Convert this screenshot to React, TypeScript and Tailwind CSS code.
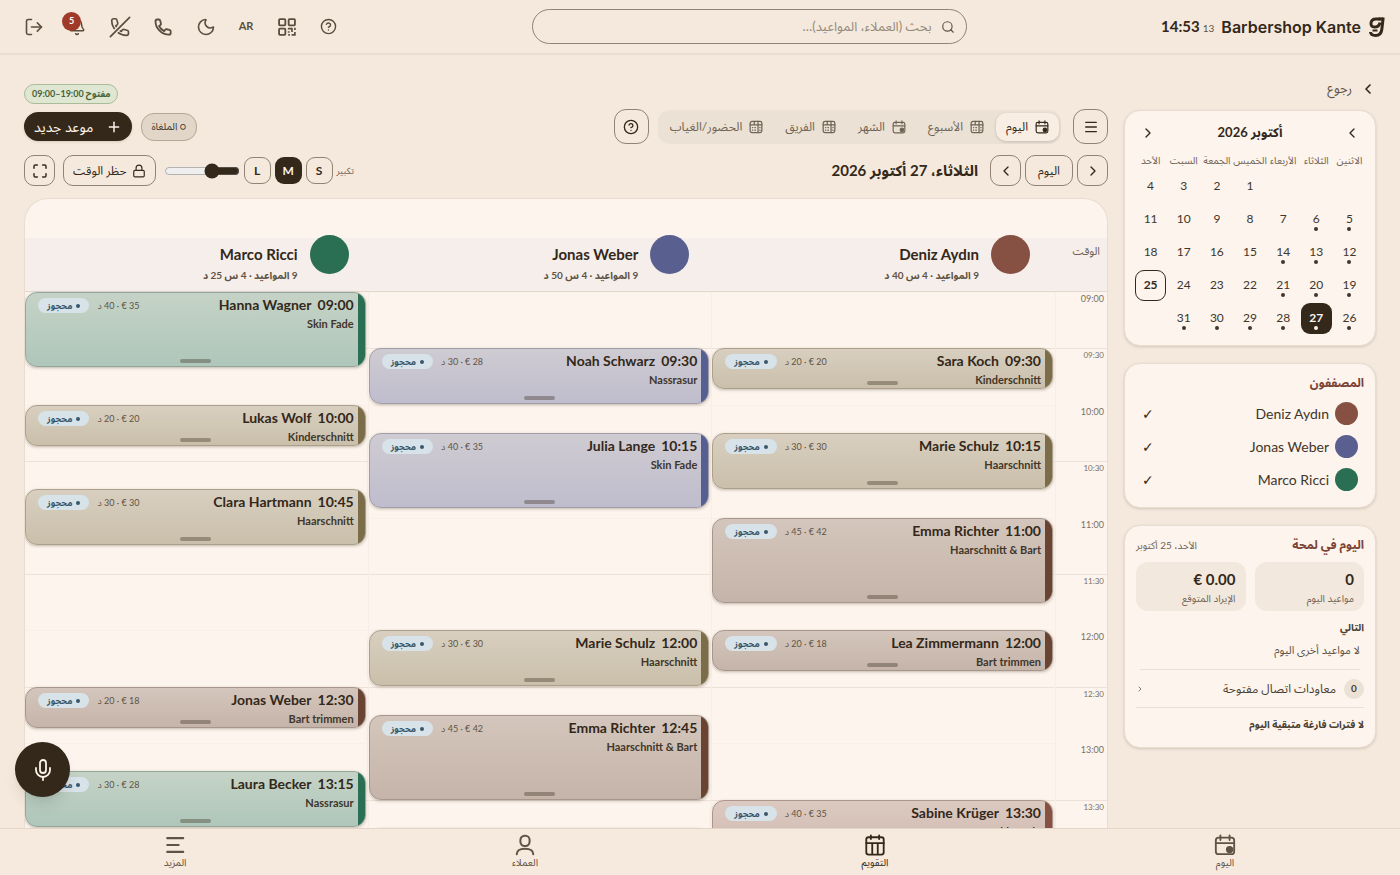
import React from 'react';
import {
  Bell,
  ChevronLeft,
  ChevronRight,
  CircleHelp,
  Lock,
  LogOut,
  Menu,
  Mic,
  Moon,
  Plus,
  Search,
} from 'lucide-react';

// One minute on the day grid, in pixels
const MINUTE = 1.88;
const OPENING = 9 * 60;

const toMinutes = (time: string) => {
  const [h, m] = time.split(':').map(Number);
  return h * 60 + m - OPENING;
};

const offset = (time: string) => Math.round(toMinutes(time) * MINUTE);

type Tone = 'green' | 'sand' | 'indigo' | 'brown' | 'rust';

const tones: Record<Tone, string> = {
  green: 'from-[#c5d3c6] to-[#afc6ba] border-[#93a79a]',
  sand: 'from-[#d9cfc0] to-[#c9bfaa] border-[#aca08d]',
  indigo: 'from-[#cfcbd2] to-[#bfbdcd] border-[#a19ea9]',
  brown: 'from-[#d4c6bc] to-[#c5b4aa] border-[#a7968c]',
  rust: 'from-[#dbcac1] to-[#ccb0a8] border-[#ad958b]',
};

const stripes: Record<Tone, string> = {
  green: 'bg-[#2a6e54]',
  sand: 'bg-[#7b6d49]',
  indigo: 'bg-[#565f92]',
  brown: 'bg-[#694433]',
  rust: 'bg-[#865142]',
};

interface Booking {
  time: string;
  client: string;
  service: string;
  price: number;
  length: number;
  tone: Tone;
}

interface Stylist {
  name: string;
  color: string;
  load: string;
  bookings: Booking[];
}

const stylists: Stylist[] = [
  {
    name: 'Deniz Aydın',
    color: 'bg-[#865142]',
    load: '9 المواعيد · 4 س 40 د',
    bookings: [
      { time: '09:30', client: 'Sara Koch', service: 'Kinderschnitt', price: 20, length: 20, tone: 'sand' },
      { time: '10:15', client: 'Marie Schulz', service: 'Haarschnitt', price: 30, length: 30, tone: 'sand' },
      { time: '11:00', client: 'Emma Richter', service: 'Haarschnitt & Bart', price: 42, length: 45, tone: 'brown' },
      { time: '12:00', client: 'Lea Zimmermann', service: 'Bart trimmen', price: 18, length: 20, tone: 'brown' },
      { time: '13:30', client: 'Sabine Krüger', service: 'Skin Fade', price: 35, length: 40, tone: 'rust' },
    ],
  },
  {
    name: 'Jonas Weber',
    color: 'bg-[#596090]',
    load: '9 المواعيد · 4 س 50 د',
    bookings: [
      { time: '09:30', client: 'Noah Schwarz', service: 'Nassrasur', price: 28, length: 30, tone: 'indigo' },
      { time: '10:15', client: 'Julia Lange', service: 'Skin Fade', price: 35, length: 40, tone: 'indigo' },
      { time: '12:00', client: 'Marie Schulz', service: 'Haarschnitt', price: 30, length: 30, tone: 'sand' },
      { time: '12:45', client: 'Emma Richter', service: 'Haarschnitt & Bart', price: 42, length: 45, tone: 'brown' },
      { time: '13:45', client: 'Lea Zimmermann', service: 'Bart trimmen', price: 18, length: 20, tone: 'brown' },
    ],
  },
  {
    name: 'Marco Ricci',
    color: 'bg-[#2a6e54]',
    load: '9 المواعيد · 4 س 25 د',
    bookings: [
      { time: '09:00', client: 'Hanna Wagner', service: 'Skin Fade', price: 35, length: 40, tone: 'green' },
      { time: '10:00', client: 'Lukas Wolf', service: 'Kinderschnitt', price: 20, length: 20, tone: 'sand' },
      { time: '10:45', client: 'Clara Hartmann', service: 'Haarschnitt', price: 30, length: 30, tone: 'sand' },
      { time: '12:30', client: 'Jonas Weber', service: 'Bart trimmen', price: 18, length: 20, tone: 'brown' },
      { time: '13:15', client: 'Laura Becker', service: 'Nassrasur', price: 28, length: 30, tone: 'green' },
    ],
  },
];

const slots = ['09:00', '09:30', '10:00', '10:30', '11:00', '11:30', '12:00', '12:30', '13:00', '13:30'];

const weekdays = ['الاثنين', 'الثلاثاء', 'الأربعاء', 'الخميس', 'الجمعة', 'السبت', 'الأحد'];
const busyDays = [5, 6, 12, 13, 14, 19, 20, 21, 26, 27, 28, 29, 30, 31];

const outlined = 'flex items-center justify-center border border-[#8f8373] text-[#33281a]';
const card = 'rounded-2xl border border-[#e9ddd1] bg-[#fcf4ed] shadow-[0_1px_3px_rgba(60,40,20,0.18)]';

const handset =
  'M3 5a2 2 0 0 1 2-2h2c1 0 1.500.6 1.700 1.500l.8 3.200c.2.8 0 1.400-.6 1.900l-1.600 1.200c1.300 2.700 3.400 4.800 6.100 6.100l1.200-1.600c.5-.6 1.100-.8 1.900-.6l3.200.8c.9.2 1.500.8 1.500 1.700v2a2 2 0 0 1-2 2C10.500 21.200 3 13.500 3 5z';

function PhoneIcon() {
  return (
    <svg viewBox="0 0 24 24" className="size-[20px]" fill="none" stroke="currentColor" strokeWidth="2.200" strokeLinejoin="round">
      <path d={handset} />
    </svg>
  );
}

function PhoneSlash() {
  return (
    <svg viewBox="0 0 24 24" className="size-[22px]" fill="none" stroke="currentColor" strokeWidth="1.800" strokeLinecap="round" strokeLinejoin="round">
      <path d={handset} />
      <path d="M22 2 2 22" stroke="#f5e9dd" strokeWidth="5" />
      <path d="M22.500 1.500 1.500 22.500" />
    </svg>
  );
}

function QrIcon() {
  return (
    <svg viewBox="0 0 24 24" className="size-[20px]" fill="none" stroke="currentColor" strokeWidth="2.200" strokeLinejoin="round">
      <rect x="2.500" y="2.500" width="7.500" height="7.500" rx="1" />
      <rect x="14" y="2.500" width="7.500" height="7.500" rx="1" />
      <rect x="2.500" y="14" width="7.500" height="7.500" rx="1" />
      <path d="M13 14h5v4M21.500 13v2.500M14 17v2M21.500 18v3.500H17.500M13.500 21.500h2" strokeWidth="2" />
    </svg>
  );
}

function DayIcon({ className }: { className: string }) {
  return (
    <svg viewBox="0 0 24 24" className={className} fill="none" stroke="currentColor" strokeWidth="2" strokeLinecap="round" strokeLinejoin="round">
      <rect x="2" y="4" width="20" height="18" rx="3" />
      <path d="M2 10h20M7 1.500v5M17 1.500v5" />
      <circle cx="17" cy="17" r="3" fill="currentColor" />
    </svg>
  );
}

function GridIcon() {
  return (
    <svg viewBox="0 0 24 24" className="size-[14px]" fill="none" stroke="currentColor" strokeWidth="2.100" strokeLinecap="round" strokeLinejoin="round">
      <rect x="2" y="2.500" width="20" height="19" rx="3" />
      <path d="M2 8.500h20M9 2.500v6M15.500 2.500v19" />
      <path d="M6 13h.5M10 13h1M6 17.500h.5M10 17.500h1M18.500 13h.5M18.500 17.500h.5" />
    </svg>
  );
}

function CalendarColumns() {
  return (
    <svg viewBox="0 0 24 24" className="size-[22px]" fill="none" stroke="currentColor" strokeWidth="2" strokeLinecap="round" strokeLinejoin="round">
      <rect x="2.500" y="3.500" width="19" height="19" rx="2.500" />
      <path d="M2.500 10h19M9 10v12M15 10v12M7.500 1.500v4M16.500 1.500v4" />
    </svg>
  );
}

function Person() {
  return (
    <svg viewBox="0 0 24 24" className="size-[22px]" fill="none" stroke="currentColor" strokeWidth="2.200" strokeLinecap="round">
      <rect x="7" y="2" width="10" height="11" rx="4.500" />
      <path d="M3 22c0-4 3.500-6 9-6s9 2 9 6" />
    </svg>
  );
}

function Lines() {
  return (
    <svg viewBox="0 0 24 24" className="size-[22px]" fill="none" stroke="currentColor" strokeWidth="2.200" strokeLinecap="round">
      <path d="M3.500 4.500h17.500M3.500 12h12.500M3.500 19.500h17.500" />
    </svg>
  );
}

function Corners() {
  return (
    <svg viewBox="0 0 24 24" className="size-4" fill="none" stroke="currentColor" strokeWidth="2.200" strokeLinecap="round" strokeLinejoin="round">
      <path d="M8 3H5a2 2 0 0 0-2 2v3M16 3h3a2 2 0 0 1 2 2v3M8 21H5a2 2 0 0 1-2-2v-3M16 21h3a2 2 0 0 0 2-2v-3" />
    </svg>
  );
}

function Logo() {
  return (
    <svg viewBox="0 0 18 22" className="h-[22px] w-[18px]" fill="none" stroke="currentColor" strokeWidth="3">
      <path d="M12.500 3H8C4.800 3 3.200 4.600 3 7.200c-.2 2.600 1 3.900 3.400 3.900 3 0 5.100-1.700 5.600-4.600" />
      <path d="M10.500 3h4.800" />
      <path d="M15.200 1.500 13.800 13.500c-.5 4-2.300 6-6.100 6-3 0-5-.9-5.200-3.500" />
      <path d="M4.500 14.500h5" strokeWidth="2" />
    </svg>
  );
}

function IconButton({ label, children }: { label: string; children: React.ReactNode }) {
  return (
    <button aria-label={label} className="relative flex size-10 items-center justify-center">
      {children}
    </button>
  );
}

function TopBar() {
  return (
    <header className="flex h-[55px] shrink-0 items-center justify-between border-b-2 border-[#e9ddd1] px-[14px]">
      <div className="flex w-[236px] items-center gap-[7px]">
        <Logo />
        <span dir="ltr" className="font-[Inter] text-[16px] font-semibold whitespace-nowrap">Barbershop Kante</span>
        <time dir="ltr" className="flex items-baseline gap-[3px] text-[15px] font-bold">
          14:53 <span className="text-[10px] font-normal text-[#5f5344]">13</span>
        </time>
      </div>
      <label className="flex h-[35px] w-[435px] items-center gap-[9px] rounded-full border border-[#8f8373] px-[11px]">
        <Search className="size-[14px] text-[#5f5344]" strokeWidth={2} />
        <input
          type="search"
          aria-label="بحث"
          placeholder="بحث (العملاء، المواعيد)…"
          className="min-w-0 flex-1 bg-transparent text-[13px] outline-none placeholder:text-[#94897b]"
        />
      </label>
      <div className="flex text-[#5a4d3e]">
        <div className="flex gap-px">
          <IconButton label="مساعدة"><CircleHelp className="size-[17px]" strokeWidth={2} /></IconButton>
          <IconButton label="رمز QR"><QrIcon /></IconButton>
          <IconButton label="اللغة"><span className="text-[11px] font-bold">AR</span></IconButton>
        </div>
        <div className="flex gap-[3px]">
          <IconButton label="الوضع الليلي"><Moon className="size-[20px]" strokeWidth={1.9} /></IconButton>
          <IconButton label="اتصال"><PhoneIcon /></IconButton>
          <IconButton label="إيقاف المكالمات"><PhoneSlash /></IconButton>
          <IconButton label="الإشعارات">
            <Bell className="size-[18px]" strokeWidth={2} />
            <span className="absolute top-[5px] left-[5px] flex size-[19px] items-center justify-center rounded-full bg-[#a03a28] text-[9px] font-bold text-white">5</span>
          </IconButton>
          <IconButton label="تسجيل الخروج"><LogOut className="size-[20px]" strokeWidth={1.9} /></IconButton>
        </div>
      </div>
    </header>
  );
}

function MiniCalendar() {
  return (
    <section className={`${card} px-[10px] pt-[9px] pb-[11px]`}>
      <div className="flex h-[25px] items-center justify-between px-[5px]">
        <button aria-label="الشهر السابق"><ChevronLeft className="size-4" /></button>
        <h2 className="text-[13px] font-bold">أكتوبر 2026</h2>
        <button aria-label="الشهر التالي"><ChevronRight className="size-4" /></button>
      </div>
      <div className="mt-[6px] grid grid-cols-7 gap-[2px] text-center">
        {weekdays.map((day) => (
          <span key={day} className="flex h-[18px] items-center justify-center text-[10px] whitespace-nowrap text-[#6f6354]">{day}</span>
        ))}
        <span className="col-span-3" />
        {Array.from({ length: 31 }, (_, i) => i + 1).map((day) => (
          <button
            key={day}
            className={`relative h-[31px] rounded-[9px] pb-[2px] text-[12px] ${
              day === 27 ? 'bg-[#33281a] font-bold text-[#fcf4ed]' : day === 25 ? 'border border-[#33281a] font-bold' : 'text-[#41362a]'
            }`}
          >
            {day}
            {busyDays.includes(day) && (
              <span className="absolute inset-x-0 bottom-1 mx-auto size-1 rounded-full bg-current" />
            )}
          </button>
        ))}
      </div>
    </section>
  );
}

function StylistFilter() {
  return (
    <section className={`${card} px-[11px] pt-[10px] pb-[11px]`}>
      <h2 className="text-[12px] leading-[18px] font-bold text-[#7c4234]">المصففون</h2>
      <div className="mt-[5px]">
        {stylists.map((s) => (
          <button key={s.name} aria-pressed="true" className="flex h-[33px] w-full items-center gap-[6px] px-[6px] text-[14px] text-[#41362a]">
            <span className={`size-[23px] rounded-full ${s.color}`} />
            <span dir="ltr">{s.name}</span>
            <span className="ms-auto text-[14px] text-[#33281a]">✓</span>
          </button>
        ))}
      </div>
    </section>
  );
}

function Glance() {
  return (
    <section className={`${card} px-[11px] pt-[10px] pb-[13px] text-[#4a3e30]`}>
      <div className="flex items-center justify-between leading-[18px]">
        <h2 className="text-[12px] font-bold text-[#7c4234]">اليوم في لمحة</h2>
        <span className="text-[10px] text-[#6f6354]">الأحد، 25 أكتوبر</span>
      </div>
      <div className="mt-2 grid grid-cols-2 gap-[9px]">
        <div className="rounded-xl bg-[#f2e8dd] px-[10px] pt-[6px] pb-[5px]">
          <p className="text-[15px] leading-[22px] font-bold text-[#33281a]">0</p>
          <p className="text-[10px] leading-[16px] text-[#6f6354]">مواعيد اليوم</p>
        </div>
        <div className="rounded-xl bg-[#f2e8dd] px-[10px] pt-[6px] pb-[5px]">
          <p className="text-[15px] leading-[22px] font-bold text-[#33281a]">0.00 €</p>
          <p className="text-[10px] leading-[16px] text-[#6f6354]">الإيراد المتوقع</p>
        </div>
      </div>
      <h3 className="mt-[7px] text-[10px] leading-[18px] font-bold">التالي</h3>
      <p className="mx-1 border-b border-[#eadfd4] pt-[4px] pb-[9px] text-[11px] leading-[20px] text-[#5f5344]">لا مواعيد أخرى اليوم</p>
      <button className="flex h-[38px] w-full items-center gap-2 border-b border-[#eadfd4] text-[12px]">
        <span className="flex size-5 items-center justify-center rounded-full bg-[#ebe1d4] text-[10px] font-bold">0</span>
        معاودات اتصال مفتوحة
        <ChevronRight className="ms-auto size-2" />
      </button>
      <p className="pt-[6px] text-[10px] leading-[20px] font-bold">لا فترات فارغة متبقية اليوم</p>
    </section>
  );
}

function ViewSwitch() {
  const views = ['اليوم', 'الأسبوع', 'الشهر', 'الفريق', 'الحضور/الغياب'];
  return (
    <div className="flex h-[34px] items-center gap-[2px] rounded-xl bg-[#ebe1d5] p-[2px]">
      {views.map((view, i) => (
        <button
          key={view}
          className={`flex h-[28px] items-center gap-[7px] rounded-[10px] px-[10px] text-[12px] whitespace-nowrap ${
            i === 0 ? 'bg-[#f8eee4] text-[#33281a] shadow-[0_1px_3px_rgba(60,40,20,0.2)]' : 'text-[#6f6354]'
          }`}
        >
          {i === 0 || i === 2 ? <DayIcon className="size-[14px]" /> : <GridIcon />}
          {view}
        </button>
      ))}
    </div>
  );
}

function Toolbar() {
  return (
    <>
      <div className="flex items-end justify-between pt-[5px]">
        <div className="flex items-center gap-3">
          <button aria-label="القائمة" className={`${outlined} size-[35px] rounded-xl`}><Menu className="size-4" /></button>
          <ViewSwitch />
          <button aria-label="مساعدة" className={`${outlined} -ms-[3px] size-[35px] rounded-xl text-[#5f5344]`}><CircleHelp className="size-4" /></button>
        </div>
        <div className="flex flex-col items-end gap-2 pb-[3px]">
          <span className="rounded-full border border-[#a9bb98] bg-[#dfe7d2] px-[7px] text-[9px] leading-[18px] font-bold text-[#4a6337]">
            مفتوح <bdi dir="ltr">09:00–19:00</bdi>
          </span>
          <div className="flex items-center gap-[9px]">
            <button className="h-[28px] rounded-[13px] border border-[#b3a797] bg-[#e2d6c9] px-[9px] text-[10px] text-[#41362a]">○ الملغاة</button>
            <button className="flex h-[29px] items-center gap-[13px] rounded-full bg-[#33281a] px-[10px] text-[14px] text-[#fcf4ed] shadow-sm">
              <Plus className="size-4" strokeWidth={2.2} />
              موعد جديد
            </button>
          </div>
        </div>
      </div>
      <div className="mt-[11px] flex items-center justify-between">
        <div className="flex items-center gap-1">
          <button aria-label="اليوم التالي" className={`${outlined} size-[31px] rounded-[10px]`}><ChevronRight className="size-4" /></button>
          <button className={`${outlined} h-[31px] w-[48px] rounded-[10px] text-[12px]`}>اليوم</button>
          <button aria-label="اليوم السابق" className={`${outlined} size-[31px] rounded-[10px]`}><ChevronLeft className="size-4" /></button>
          <h1 className="ms-2 text-[15px] font-bold">الثلاثاء، 27 أكتوبر 2026</h1>
        </div>
        <div className="flex items-center gap-1">
          <label htmlFor="zoom" className="text-[9px] text-[#6f6354]">تكبير</label>
          <button className={`${outlined} size-[27px] rounded-[9px] text-[12px] font-bold`}>S</button>
          <button className="size-[27px] rounded-[9px] bg-[#33281a] text-[12px] font-bold text-[#fcf4ed]">M</button>
          <button className={`${outlined} size-[27px] rounded-[9px] text-[12px] font-bold`}>L</button>
          <input id="zoom" type="range" min={0} max={100} defaultValue={33} className="w-[76px] accent-[#33281a]" />
          <button className={`${outlined} ms-1 h-[31px] gap-[5px] rounded-[10px] px-[9px] text-[12px]`}>
            <Lock className="size-[14px]" />
            حظر الوقت
          </button>
          <button aria-label="ملء الشاشة" className={`${outlined} ms-1 size-[31px] rounded-[10px]`}><Corners /></button>
        </div>
      </div>
    </>
  );
}

function BookingCard({ booking }: { booking: Booking }) {
  const height = Math.max(41, Math.round(booking.length * MINUTE));
  return (
    <button
      className={`absolute right-[2px] left-0 flex items-start justify-between overflow-hidden rounded-xl border bg-linear-to-b ps-[11px] pe-3 pt-[2px] text-start shadow-[0_1px_3px_rgba(60,40,20,0.3)] ${tones[booking.tone]}`}
      style={{ top: offset(booking.time), height }}
    >
      <span className={`absolute inset-y-0 right-0 w-[7px] ${stripes[booking.tone]}`} />
      <span>
        <span className="flex items-center gap-[6px] text-[14px] leading-[20px] font-bold text-[#33281a]">
          <time>{booking.time}</time>
          <span dir="ltr">{booking.client}</span>
        </span>
        <span dir="ltr" className="block text-right text-[11px] leading-[17px] font-bold text-[#41362a]">{booking.service}</span>
      </span>
      <span className="flex items-center gap-2 pt-[3px]">
        <span className="text-[9px] text-[#5f5344]">{booking.price} € · {booking.length} د</span>
        <span className="flex h-[15px] items-center gap-1 rounded-full bg-[#d7e3e8] px-[9px] text-[9px] font-bold text-[#38576b]">
          <span className="size-1 rounded-full bg-current" />
          محجوز
        </span>
      </span>
      <span className="absolute inset-x-0 bottom-[3px] mx-auto h-1 w-[31px] rounded-full bg-[#33281a]/35" />
    </button>
  );
}

function DayGrid() {
  return (
    <section className="mt-3 flex-1 overflow-hidden rounded-t-3xl border border-b-0 border-[#e9ddd1] bg-[#fcf4ed]">
      <div className="flex border-b border-[#e3d9cf] bg-[linear-gradient(to_bottom,transparent_39px,#f5eeea_39px)] pt-9 pb-[6px]">
        <span className="w-[60px] shrink-0 ps-[7px] pt-[8px] text-[11px] text-[#6f6354]">الوقت</span>
        {stylists.map((s) => (
          <div key={s.name} className="flex flex-1 items-start gap-3 ps-[17px]">
            <span className={`size-[39px] shrink-0 rounded-full ${s.color}`} />
            <div className="pt-[8px]">
              <p dir="ltr" className="text-right text-[15px] leading-[22px] font-bold">{s.name}</p>
              <p className="text-[10px] leading-[20px] font-bold text-[#5f5344]">{s.load}</p>
            </div>
          </div>
        ))}
      </div>
      <div className="relative flex">
        <div className="w-[51px] shrink-0">
          {slots.map((slot, i) => (
            <div
              key={slot}
              className={`pe-[3px] text-right leading-3 text-[#7b7062] ${i % 2 ? 'border-t border-[#eee2d8] text-[8px]' : 'pt-px text-[9px]'}`}
              style={{ height: offset(slots[i + 1] ?? '14:00') - offset(slot), direction: 'ltr' }}
            >
              {slot}
            </div>
          ))}
        </div>
        {stylists.map((s) => (
          <div key={s.name} className="relative flex-1 border-r border-[#f7eee7]">
            {slots.map((slot, i) => (
              <div
                key={slot}
                className={i % 2 ? 'border-t border-[#eee2d8]' : 'border-t border-[#f9f0e9]'}
                style={{ height: offset(slots[i + 1] ?? '14:00') - offset(slot) }}
              />
            ))}
            {s.bookings.map((booking) => (
              <BookingCard key={booking.time} booking={booking} />
            ))}
          </div>
        ))}
      </div>
    </section>
  );
}

function BottomNav() {
  const items = [
    { label: 'اليوم', icon: <DayIcon className="size-[22px]" /> },
    { label: 'التقويم', icon: <CalendarColumns />, active: true },
    { label: 'العملاء', icon: <Person /> },
    { label: 'المزيد', icon: <Lines /> },
  ];
  return (
    <nav className="grid h-[47px] shrink-0 grid-cols-4 border-t border-[#e3d6c9] bg-[#f6e9de]">
      {items.map((item) => (
        <a
          key={item.label}
          href="#"
          className={`flex flex-col items-center pt-[5px] text-[10px] leading-3 ${item.active ? 'text-[#33281a]' : 'text-[#5f5344]'}`}
        >
          {item.icon}
          {item.label}
        </a>
      ))}
    </nav>
  );
}

export default function App() {
  return (
    <div
      dir="rtl"
      className="relative flex h-screen flex-col overflow-hidden bg-[#f5e9dd] font-[Lato,'Noto_Sans_Arabic','DejaVu_Sans',sans-serif] text-[#33281a]"
    >
      <TopBar />
      <div className="flex min-h-0 flex-1 gap-4 overflow-hidden px-6 pt-6">
        <aside className="flex w-[252px] shrink-0 flex-col gap-[17px]">
          <a href="#" className="-mb-[6px] flex h-5 items-center gap-2 text-[13px] text-[#5f5344]">
            <ChevronLeft className="size-4 text-[#33281a]" strokeWidth={2.5} />
            رجوع
          </a>
          <MiniCalendar />
          <StylistFilter />
          <Glance />
        </aside>
        <main className="flex min-w-0 flex-1 flex-col">
          <Toolbar />
          <DayGrid />
        </main>
      </div>
      <BottomNav />
      <button aria-label="تسجيل صوتي" className="absolute bottom-[78px] left-[15px] flex size-[55px] items-center justify-center rounded-full bg-[#33281a] text-[#fcf4ed] shadow-lg">
        <Mic className="size-6" strokeWidth={1.8} />
      </button>
    </div>
  );
}
